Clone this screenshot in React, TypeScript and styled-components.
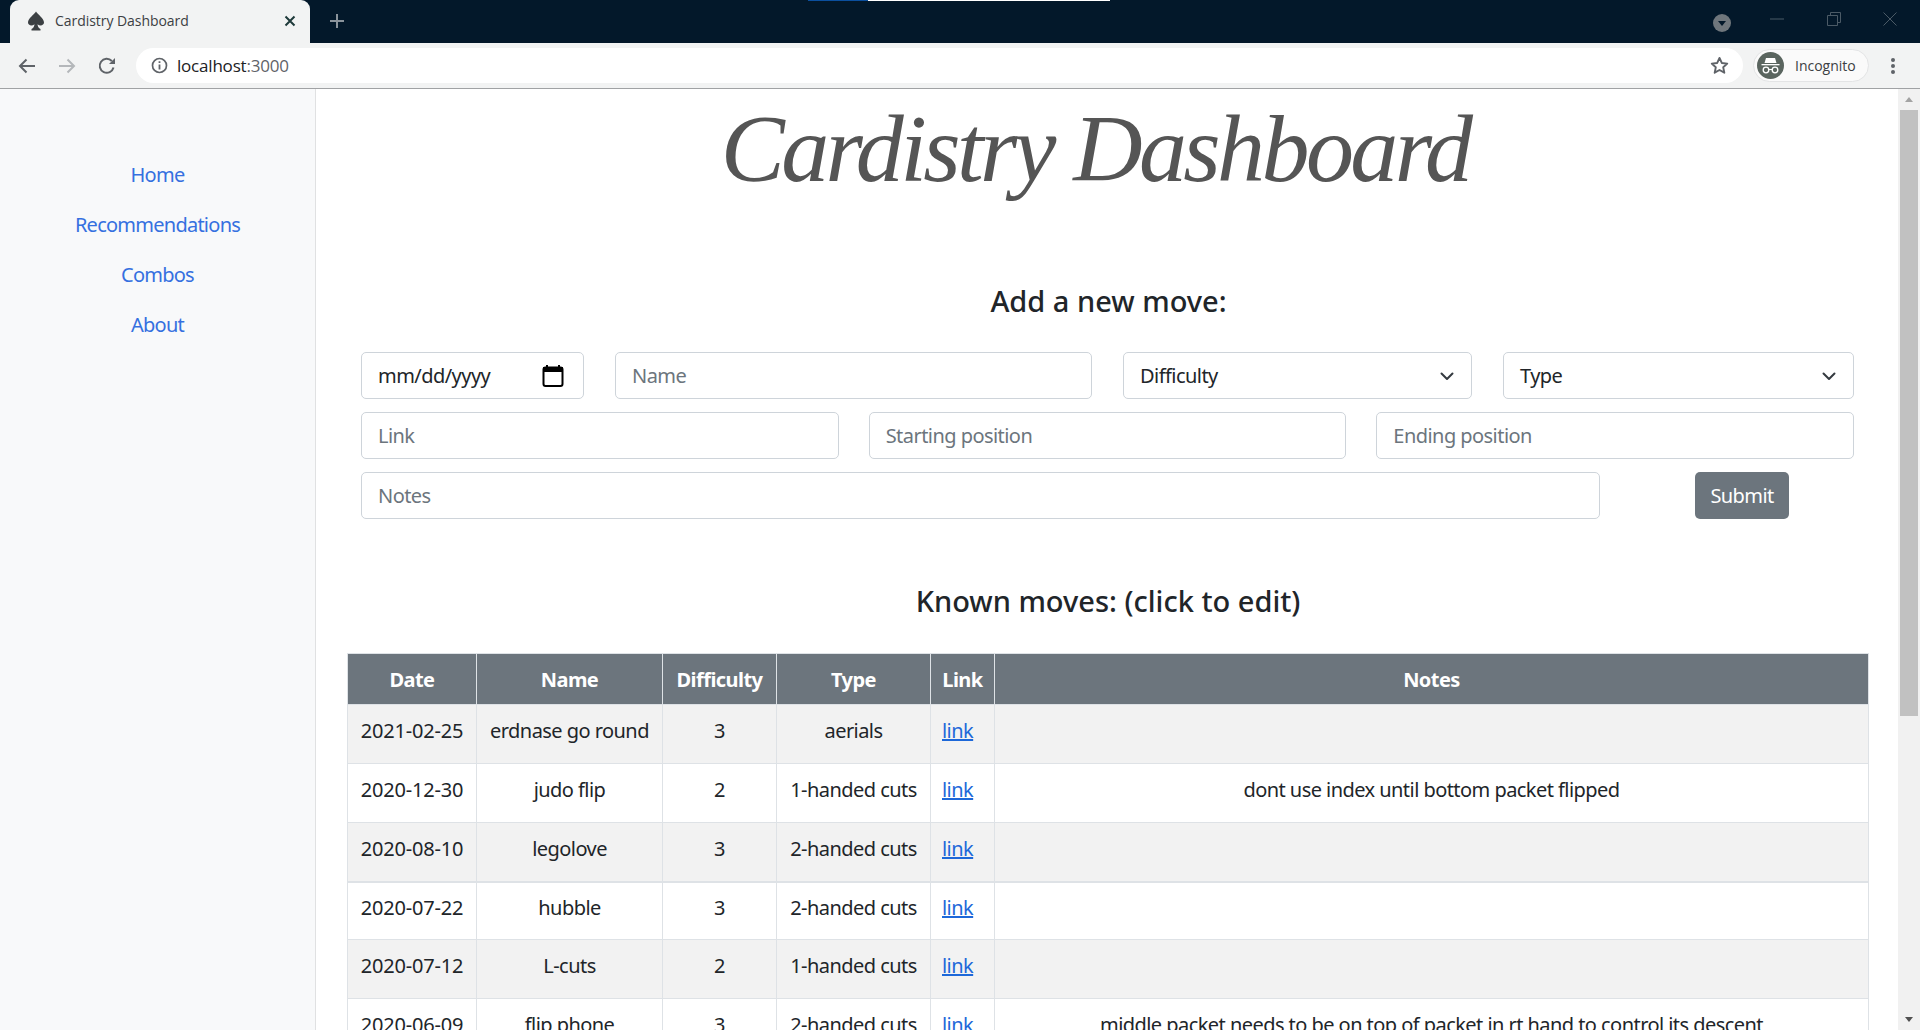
import React from "react";
import styled, { createGlobalStyle } from "styled-components";

const GlobalStyle = createGlobalStyle`
  html, body {
    margin: 0;
    height: 100%;
    overflow: hidden;
    background: #fff;
  }
  * {
    box-sizing: border-box;
  }
`;

const Window = styled.div`
  height: 1030px;
  display: flex;
  flex-direction: column;
  font-family: "Noto Sans", "Open Sans", sans-serif;
  color: #212529;
`;

/* browser chrome */
const TabStrip = styled.div`
  position: relative;
  height: 43px;
  flex: none;
  display: flex;
  align-items: flex-end;
  background: #03182a;
  padding-left: 10px;
`;

const LoadBar = styled.div`
  position: absolute;
  top: 0;
  left: 808px;
  width: 302px;
  height: 1px;
  background: linear-gradient(to right, #0b4f9e 0 60px, #fff 60px);
`;

const Tab = styled.div`
  width: 300px;
  height: 43px;
  display: flex;
  align-items: center;
  padding: 0 14px 2px 16px;
  background: #f2f3f3;
  border-radius: 9px 9px 0 0;
  font-family: "Open Sans", sans-serif;
  font-size: 14px;
  letter-spacing: -0.05px;
  color: #3c4043;
`;

const TabTitle = styled.span`
  flex: 1;
  margin-left: 9px;
`;

const NewTab = styled.div`
  margin: 0 0 6px 19px;
  height: 32px;
  display: flex;
  align-items: center;
`;

const WindowControls = styled.div`
  margin-left: auto;
  height: 43px;
  display: flex;
  align-items: center;
`;

const Toolbar = styled.div`
  height: 46px;
  flex: none;
  display: flex;
  align-items: center;
  background: #f2f3f3;
  border-bottom: 1px solid #a0a2a4;
  padding: 0 25px 0 18px;
`;

const NavIcon = styled.div`
  width: 40px;
  height: 24px;
  display: flex;
  align-items: center;
`;

const Omnibox = styled.div`
  flex: 1;
  height: 35px;
  margin-left: -2px;
  display: flex;
  align-items: center;
  background: #fff;
  border-radius: 18px;
  padding: 0 14px 0 15px;
  font-family: "Open Sans", sans-serif;
  font-size: 17px;
  letter-spacing: -0.2px;
  color: #202124;
`;

const Port = styled.span`
  color: #5f6368;
`;

const Url = styled.span`
  margin-left: 9px;
  flex: 1;
`;

const Profile = styled.div`
  margin-left: 10px;
  width: 116px;
  height: 33px;
  display: flex;
  align-items: center;
  gap: 11px;
  padding-left: 3px;
  background: #fafafa;
  border: 1px solid #e3e4e5;
  border-radius: 17px;
  font-family: "Open Sans", sans-serif;
  font-size: 14px;
  color: #3c4043;
`;

const MenuDots = styled.div`
  margin-left: 22px;
  display: flex;
  flex-direction: column;
  gap: 2px;
`;

const Dot = styled.i`
  width: 4px;
  height: 4px;
  border-radius: 50%;
  background: #5f6368;
`;

/* page */
const Viewport = styled.div`
  flex: 1;
  min-height: 0;
  display: flex;
  letter-spacing: -0.55px;
`;

const Sidebar = styled.nav`
  width: 316px;
  flex: none;
  display: flex;
  flex-direction: column;
  align-items: center;
  gap: 20px;
  padding-top: 71px;
  background: #f8f9fa;
  border-right: 1px solid #e0e1e2;
`;

const SideLink = styled.a`
  line-height: 30px;
  font-size: 20px;
  letter-spacing: -0.75px;
  color: #3570e0;
`;

const Main = styled.main`
  flex: 1;
  min-width: 0;
  overflow: hidden;
  padding: 0 29px 0 31px;
`;

const Title = styled.h1`
  margin: 0;
  height: 170px;
  padding: 10px 26px 0 0;
  text-align: center;
  font-family: "Liberation Serif", serif;
  font-style: italic;
  font-weight: 400;
  font-size: 96px;
  line-height: 100px;
  letter-spacing: -3.6px;
  color: #555;
`;

const Heading = styled.h2`
  margin: 0;
  text-align: center;
  font-size: 29px;
  font-weight: 500;
  line-height: 36px;
  letter-spacing: 0;
  color: #212529;
`;

const AddHeading = styled(Heading)`
  margin: 24px 0 0 1px;
`;

const MoveForm = styled.form`
  margin: 33px 15px 0 14px;
  display: flex;
  flex-direction: column;
  gap: 13px;
`;

const FormRow = styled.div<{ $cols: string; $gap: number }>`
  display: grid;
  grid-template-columns: ${(p) => p.$cols};
  column-gap: ${(p) => p.$gap}px;
  align-items: start;
`;

const Field = styled.div<{ $placeholder?: boolean }>`
  height: 47px;
  display: flex;
  align-items: center;
  justify-content: space-between;
  padding: 0 16px;
  background: #fff;
  border: 1px solid #ced4da;
  border-radius: 5px;
  font-size: 20px;
  color: ${(p) => (p.$placeholder ? "#6c757d" : "#212529")};
`;

const SubmitButton = styled.button`
  justify-self: center;
  width: 94px;
  height: 47px;
  border: 0;
  border-radius: 5px;
  background: #6c757d;
  color: #fff;
  font-family: inherit;
  font-size: 20px;
  letter-spacing: -0.6px;
`;

const KnownHeading = styled(Heading)`
  margin: 64px 0 0 0;
`;

const MovesTable = styled.table`
  margin: 34px 0 0;
  width: 1521px;
  table-layout: fixed;
  border-collapse: collapse;
  font-size: 20px;
  text-align: center;
`;

const Th = styled.th`
  height: 51px;
  padding: 0;
  background: #6c757d;
  color: #fff;
  font-weight: 700;
  border: 1px solid #dee2e6;
`;

const Td = styled.td`
  height: 59px;
  padding: 0 0 7px;
  border: 1px solid #dee2e6;
  color: #212529;
`;

const Tr = styled.tr<{ $odd: boolean }>`
  background: ${(p) => (p.$odd ? "#f2f2f2" : "#fff")};

  &:nth-child(4) td {
    height: 58px;
    border-top-width: 2px;
  }
`;

const DateCell = styled(Td)`
  letter-spacing: -0.2px;
`;

const LinkCell = styled(Td)`
  text-align: left;
  padding-left: 11px;
`;

const MoveLink = styled.a`
  color: #1d68d9;
  text-decoration: underline;
`;

const Scrollbar = styled.div`
  width: 22px;
  flex: none;
  display: flex;
  flex-direction: column;
  align-items: center;
  background: #f1f1f1;
`;

const ScrollTrack = styled.div`
  flex: 1;
  width: 100%;
`;

const ScrollThumb = styled.div`
  width: 18px;
  height: 606px;
  background: #c1c1c1;
`;

const Arrow = styled.div<{ $up?: boolean }>`
  width: 0;
  height: 0;
  margin: 8px 0;
  border-left: 4px solid transparent;
  border-right: 4px solid transparent;
  ${(p) =>
    p.$up ? "border-bottom: 5px solid #a3a3a3;" : "border-top: 5px solid #505050;"}
`;

type Move = {
  date: string;
  name: string;
  difficulty: number;
  type: string;
  notes: string;
};

const moves: Move[] = [
  { date: "2021-02-25", name: "erdnase go round", difficulty: 3, type: "aerials", notes: "" },
  { date: "2020-12-30", name: "judo flip", difficulty: 2, type: "1-handed cuts", notes: "dont use index until bottom packet flipped" },
  { date: "2020-08-10", name: "legolove", difficulty: 3, type: "2-handed cuts", notes: "" },
  { date: "2020-07-22", name: "hubble", difficulty: 3, type: "2-handed cuts", notes: "" },
  { date: "2020-07-12", name: "L-cuts", difficulty: 2, type: "1-handed cuts", notes: "" },
  { date: "2020-06-09", name: "flip phone", difficulty: 3, type: "2-handed cuts", notes: "middle packet needs to be on top of packet in rt hand to control its descent" },
];

const columns = [129, 186, 114, 154, 64, 874];

const Chevron = () => (
  <svg width="16" height="16" viewBox="0 0 16 16" fill="none" stroke="#343a40" strokeWidth="2" strokeLinecap="round" strokeLinejoin="round">
    <path d="M2.5 5.5 8 11l5.5-5.5" />
  </svg>
);

const CalendarIcon = () => (
  <svg width="22" height="24" viewBox="0 0 22 24" fill="none" style={{ marginRight: 3 }}>
    <path d="M5 1v4M17 1v4" stroke="#000" strokeWidth="2" />
    <rect x="1.5" y="3.5" width="19" height="18.500" rx="2" stroke="#000" strokeWidth="2" />
    <rect x="1" y="3" width="20" height="5" fill="#000" />
  </svg>
);

const Spade = () => (
  <svg width="20" height="20" viewBox="0 0 20 20" fill="#3c4043">
    <path d="M10 .5C8 4 2 7 2 11.500c0 2.800 3.800 4 6.500 1.700C8.300 15.500 7.300 17 5.500 18v1.500h9V18c-1.800-1-2.800-2.500-3-4.800 2.700 2.300 6.500 1.100 6.500-1.700C18 7 12 4 10 .5z" />
  </svg>
);

const Incognito = () => (
  <svg width="27" height="27" viewBox="0 0 27 27">
    <circle cx="13.500" cy="13.500" r="13.500" fill="#5a655f" />
    <path d="M9 6h9l1.500 5h-12z" fill="#fff" />
    <path d="M4.500 12h18v1.300h-18z" fill="#fff" />
    <circle cx="9" cy="18" r="2.800" fill="none" stroke="#fff" strokeWidth="1.300" />
    <circle cx="18" cy="18" r="2.800" fill="none" stroke="#fff" strokeWidth="1.300" />
    <path d="M11.500 17.500h4" stroke="#fff" strokeWidth="1.100" />
  </svg>
);

export default function App() {
  return (
    <Window>
      <GlobalStyle />
      <TabStrip>
        <LoadBar />
        <Tab>
          <Spade />
          <TabTitle>Cardistry Dashboard</TabTitle>
          <svg width="12" height="12" viewBox="0 0 12 12" stroke="#1f3a3a" strokeWidth="2">
            <path d="M1.500 1.500l9 9M10.500 1.500l-9 9" />
          </svg>
        </Tab>
        <NewTab>
          <svg width="16" height="16" viewBox="0 0 16 16" stroke="#8a939b" strokeWidth="2">
            <path d="M8 1v14M1 8h14" />
          </svg>
        </NewTab>
        <WindowControls>
          <svg width="18" height="18" viewBox="0 0 18 18" style={{ marginRight: 39, marginTop: 3 }}>
            <circle cx="9" cy="9" r="9" fill="#6f767c" />
            <path d="M5 7h8l-4 5z" fill="#03182a" />
          </svg>
          <svg width="14" height="2" viewBox="0 0 14 2" style={{ marginRight: 43, marginTop: -6 }}>
            <path d="M0 1h14" stroke="#4b5a66" />
          </svg>
          <svg width="14" height="14" viewBox="0 0 14 14" fill="none" stroke="#4b5a66" style={{ marginRight: 42, marginTop: -6 }}>
            <path d="M.5 3.500h10v10H.5zM3.500 3.500v-3h10v10h-3" />
          </svg>
          <svg width="14" height="14" viewBox="0 0 14 14" stroke="#4b5a66" style={{ marginRight: 23, marginTop: -6 }}>
            <path d="M.5.5l13 13M13.500.5l-13 13" />
          </svg>
        </WindowControls>
      </TabStrip>

      <Toolbar>
        <NavIcon>
          <svg width="18" height="16" viewBox="0 0 18 16" fill="none" stroke="#5f6368" strokeWidth="2">
            <path d="M17 8H2M8.500 1.500 2 8l6.500 6.500" />
          </svg>
        </NavIcon>
        <NavIcon>
          <svg width="18" height="16" viewBox="0 0 18 16" fill="none" stroke="#b4b7ba" strokeWidth="2">
            <path d="M1 8h15M9.500 1.500 16 8l-6.500 6.500" />
          </svg>
        </NavIcon>
        <NavIcon>
          <svg width="18" height="18" viewBox="0 0 18 18" fill="none">
            <path d="M15.500 10.500A7 7 0 1 1 13.800 4" stroke="#5f6368" strokeWidth="2" />
            <path d="M11 7h6V1z" fill="#5f6368" />
          </svg>
        </NavIcon>
        <Omnibox>
          <svg width="17" height="17" viewBox="0 0 17 17" fill="none">
            <circle cx="8.500" cy="8.500" r="7" stroke="#5f6368" strokeWidth="1.700" />
            <path d="M8.500 7.500v5M8.500 4.300v1.800" stroke="#5f6368" strokeWidth="1.800" />
          </svg>
          <Url>
            localhost<Port>:3000</Port>
          </Url>
          <svg width="19" height="19" viewBox="0 0 24 24" fill="none" stroke="#5f6368" strokeWidth="2.400" strokeLinejoin="round">
            <path d="M12 2.500l2.900 6.300 6.900.8-5.100 4.700 1.400 6.800-6.100-3.400-6.100 3.400 1.400-6.800L2.200 9.600l6.900-.8z" />
          </svg>
        </Omnibox>
        <Profile>
          <Incognito />
          Incognito
        </Profile>
        <MenuDots>
          <Dot />
          <Dot />
          <Dot />
        </MenuDots>
      </Toolbar>

      <Viewport>
        <Sidebar>
          <SideLink>Home</SideLink>
          <SideLink>Recommendations</SideLink>
          <SideLink>Combos</SideLink>
          <SideLink>About</SideLink>
        </Sidebar>
        <Main>
          <Title>Cardistry Dashboard</Title>
          <AddHeading>Add a new move:</AddHeading>
          <MoveForm>
            <FormRow $cols="223px 477px 349px 1fr" $gap={31}>
              <Field>
                mm/dd/yyyy
                <CalendarIcon />
              </Field>
              <Field $placeholder>Name</Field>
              <Field>
                Difficulty
                <Chevron />
              </Field>
              <Field>
                Type
                <Chevron />
              </Field>
            </FormRow>
            <FormRow $cols="1fr 1fr 1fr" $gap={30}>
              <Field $placeholder>Link</Field>
              <Field $placeholder>Starting position</Field>
              <Field $placeholder>Ending position</Field>
            </FormRow>
            <FormRow $cols="1239px 1fr" $gap={30}>
              <Field $placeholder>Notes</Field>
              <SubmitButton type="button">Submit</SubmitButton>
            </FormRow>
          </MoveForm>
          <KnownHeading>Known moves: (click to edit)</KnownHeading>
          <MovesTable>
            <colgroup>
              {columns.map((w, i) => (
                <col key={i} width={w} />
              ))}
            </colgroup>
            <thead>
              <tr>
                {["Date", "Name", "Difficulty", "Type", "Link", "Notes"].map((h) => (
                  <Th key={h}>{h}</Th>
                ))}
              </tr>
            </thead>
            <tbody>
              {moves.map((m, i) => (
                <Tr key={m.date} $odd={i % 2 === 0}>
                  <DateCell>{m.date}</DateCell>
                  <Td>{m.name}</Td>
                  <Td>{m.difficulty}</Td>
                  <Td>{m.type}</Td>
                  <LinkCell>
                    <MoveLink href="#">link</MoveLink>
                  </LinkCell>
                  <Td>{m.notes}</Td>
                </Tr>
              ))}
            </tbody>
          </MovesTable>
        </Main>
        <Scrollbar>
          <Arrow $up />
          <ScrollThumb />
          <ScrollTrack />
          <Arrow />
        </Scrollbar>
      </Viewport>
    </Window>
  );
}
